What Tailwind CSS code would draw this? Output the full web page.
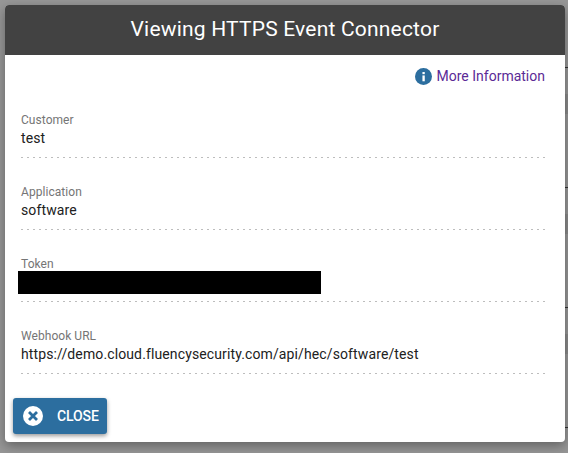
<!DOCTYPE html>
<html lang="en">
<head>
    <meta charset="UTF-8">
    <title>Viewing HTTPS Event Connector</title>
    <script src="https://cdn.jsdelivr.net/npm/@tailwindcss/browser@4"></script>
</head>
<body class="relative bg-[#979797] font-['Roboto',sans-serif] h-[453px] w-[568px] overflow-hidden">
    <!-- Table rows showing behind the dialog -->
    <div class="absolute right-0 top-[67px] w-[3px] h-px bg-[#333]"></div>
    <div class="absolute right-0 top-[94px] w-[3px] h-[20px] bg-[#8a8a8a]"></div>
    <div class="absolute right-0 top-[187px] w-[3px] h-px bg-[#333]"></div>
    <div class="absolute right-0 top-[214px] w-[3px] h-[20px] bg-[#8a8a8a]"></div>
    <div class="absolute right-0 top-[307px] w-[3px] h-px bg-[#333]"></div>
    <div class="absolute right-0 top-[334px] w-[3px] h-[20px] bg-[#8a8a8a]"></div>
    <div class="absolute right-0 top-[427px] w-[3px] h-px bg-[#333]"></div>

    <!-- Dialog -->
    <div class="relative mx-[5px] mt-[5px] w-[560px] h-[437px] bg-white rounded-[4px] shadow-[0_4px_12px_rgba(0,0,0,0.35)] overflow-hidden flex flex-col">
        <div class="h-[50px] shrink-0 bg-[#424242] text-white text-[21px] tracking-[0.2px] flex items-center justify-center">Viewing HTTPS Event Connector</div>

        <div class="flex justify-end items-center gap-[5px] pt-[11px] pr-[20px] h-[31px] text-[14px] text-[#5b2a96]">
            <svg class="w-[17px] h-[17px]" viewBox="0 0 16 16">
                <circle cx="8" cy="8" r="8" fill="#2c6e9f"/>
                <rect x="7" y="7" width="2.2" height="5.5" fill="#fff"/>
                <rect x="7" y="3.8" width="2.2" height="2" fill="#fff"/>
            </svg>
            <span>More Information</span>
        </div>

        <!-- Fields -->
        <div class="pl-[16px] pr-[16px] mt-[26px]">
            <div class="h-[72px]">
                <div class="text-[12px] leading-[16px] tracking-[0.05px] text-[#757575]">Customer</div>
                <div class="text-[14px] leading-[20px] tracking-[0.12px] text-[#212121]">test</div>
                <div class="mt-[9px] h-px bg-[repeating-linear-gradient(90deg,#bdbdbd_0_2px,transparent_2px_6px)]"></div>
            </div>
            <div class="h-[72px]">
                <div class="text-[12px] leading-[16px] tracking-[0.05px] text-[#757575]">Application</div>
                <div class="text-[14px] leading-[20px] tracking-[0.12px] text-[#212121]">software</div>
                <div class="mt-[9px] h-px bg-[repeating-linear-gradient(90deg,#bdbdbd_0_2px,transparent_2px_6px)]"></div>
            </div>
            <div class="h-[72px] relative">
                <div class="text-[12px] leading-[16px] tracking-[0.05px] text-[#757575]">Token</div>
                <div class="h-[20px]"></div>
                <div class="absolute left-[-3px] top-[15px] w-[303px] h-[23px] bg-black"></div>
                <div class="mt-[9px] h-px bg-[repeating-linear-gradient(90deg,#bdbdbd_0_2px,transparent_2px_6px)]"></div>
            </div>
            <div class="h-[72px]">
                <div class="text-[12px] leading-[16px] tracking-[0.05px] text-[#757575]">Webhook URL</div>
                <div class="text-[14px] leading-[20px] tracking-[0.12px] text-[#212121]">https://demo.cloud.fluencysecurity.com/api/hec/software/test</div>
                <div class="mt-[9px] h-px bg-[repeating-linear-gradient(90deg,#bdbdbd_0_2px,transparent_2px_6px)]"></div>
            </div>
        </div>

        <div class="pl-[8px] -mt-[2px]">
            <button class="w-[94px] h-[36px] bg-[#2c6e9f] rounded-[3px] shadow-[0_2px_4px_rgba(0,0,0,0.4)] text-white text-[14px] font-medium tracking-[-0.1px] flex items-center pl-[10px] gap-[14px]">
                <svg class="w-5 h-5" viewBox="0 0 20 20">
                    <circle cx="10" cy="10" r="10" fill="#fff"/>
                    <path d="M6 6l8 8M14 6l-8 8" stroke="#2c6e9f" stroke-width="2.8" fill="none"/>
                </svg>
                <span>CLOSE</span>
            </button>
        </div>
    </div>
</body>
</html>
